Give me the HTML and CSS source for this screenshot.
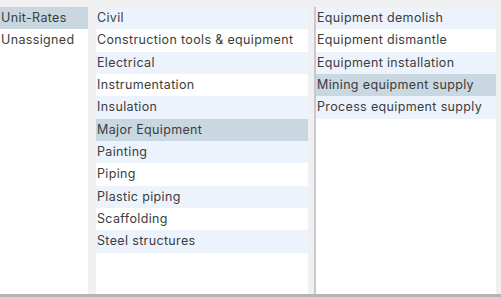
FILE: index.html
```html
<html>
<head>
    <title>Unit Rates</title>
    <link rel="stylesheet" href="styles.css">
</head>
<body>
    <div class="browser">
        <ul class="list list-groups">
            <li class="selected">Unit-Rates</li>
            <li>Unassigned</li>
        </ul>
        <ul class="list list-disciplines">
            <li>Civil</li>
            <li>Construction tools &amp; equipment</li>
            <li>Electrical</li>
            <li>Instrumentation</li>
            <li>Insulation</li>
            <li class="selected">Major Equipment</li>
            <li>Painting</li>
            <li>Piping</li>
            <li>Plastic piping</li>
            <li>Scaffolding</li>
            <li>Steel structures</li>
        </ul>
        <div class="splitter"></div>
        <ul class="list list-items">
            <li>Equipment demolish</li>
            <li>Equipment dismantle</li>
            <li>Equipment installation</li>
            <li class="selected">Mining equipment supply</li>
            <li>Process equipment supply</li>
        </ul>
    </div>
</body>
</html>
```

FILE: styles.css
```css
body {
    margin: 0;
    background-color: #f0f0f0;
    font-family: Inter, Roboto, "Liberation Sans", sans-serif;
    font-size: 12.5px;
    letter-spacing: 0.35px;
    color: #3c3c3c;
}
.browser {
    display: flex;
    height: 287px;
    padding-top: 7px;
    border-bottom: 3px solid #b4b4b4;
}
.list {
    list-style: none;
    margin: 0;
    padding: 0;
    background-color: #fff;
}
.list li {
    height: 22.35px;
    line-height: 22.35px;
    padding-left: 1px;
    white-space: nowrap;
}
.list-groups {
    width: 88px;
    margin-right: 8px;
}
.list-disciplines {
    width: 212px;
}
.list-disciplines li:nth-child(odd),
.list-items li:nth-child(odd) {
    background-color: #edf3fc;
}
.list .selected,
.list li.selected:nth-child(odd) {
    background-color: #c9d7e0;
}
.splitter {
    width: 8px;
    border-right: 2px solid #c8c8d0;
    box-sizing: border-box;
}
.list-items {
    width: 180px;
}
```
